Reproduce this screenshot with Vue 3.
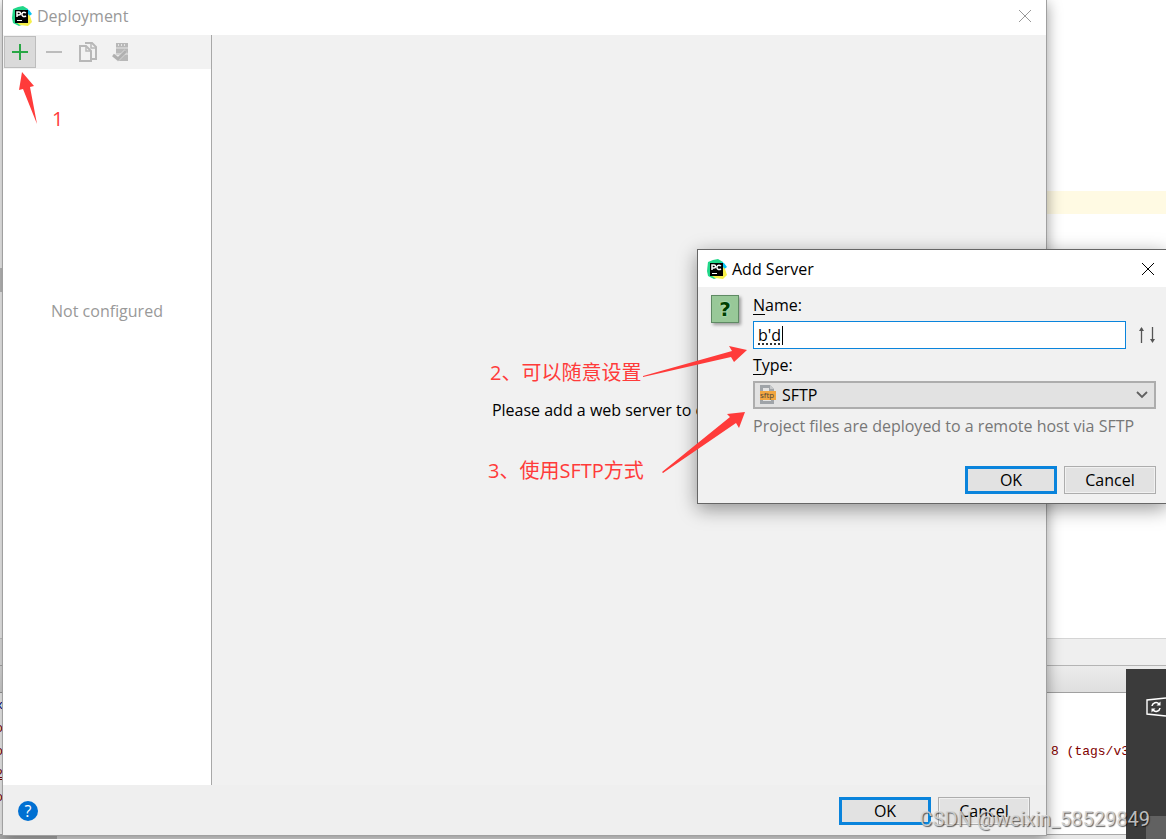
<template>
  <div class="desktop">
    <!-- IDE behind the dialogs -->
    <div class="ide">
      <div class="editor">
        <div class="active-line"></div>
        <div class="scroll-thumb"></div>
      </div>
      <div class="crumbs"></div>
      <div class="tool-header"></div>
      <div class="console">
        <div v-for="(line, i) in consoleLines" :key="i" class="console-line">
          <span class="line-head" :class="line.kind">{{ line.head }}</span>
          <span class="line-tail">{{ line.tail }}</span>
        </div>
      </div>
      <div class="status-bar"><div class="status-thumb"></div></div>
    </div>

    <aside class="dock">
      <svg class="dock-icon" width="20" height="20" viewBox="0 0 20 20" fill="none" stroke="#fff">
        <path d="M20 1L1 3v14l19 2" stroke-width="1.4" />
        <path d="M6 9a4 4 0 0 1 7-2M14 11a4 4 0 0 1-7 2" stroke-width="1.6" />
        <path d="M14.5 4.5v4h-4zM5.5 15.5v-4h4z" fill="#fff" stroke="none" />
      </svg>
      <div class="dock-corner"></div>
    </aside>

    <!-- Deployment -->
    <section class="window deployment">
      <header class="title-bar">
        <svg class="logo" viewBox="0 0 20 20">
          <path d="M1 3L6 1l5-1 5 3-1 14-8 3-6-3-1-5z" fill="#21d789" />
          <path d="M14 3l3 1 3 4-4 3z" fill="#07c3f2" />
          <path d="M15 7l3 3 2 6-4 4-8-1-3-2 4-6z" fill="#f5ef4a" />
          <path d="M3 4h13v13H3z" fill="#000" />
          <path d="M5 11V6h2a1.5 1.500 0 0 1 0 3H5M14 7c-3-2-4.500.5-4 2s2 2.200 4 1" fill="none" stroke="#fff" stroke-width="1.5" />
          <path d="M5 14.500h5" stroke="#fff" />
        </svg>
        <h1>Deployment</h1>
        <button class="close" aria-label="Close">
          <svg width="14" height="14" viewBox="0 0 14 14"><path d="M1 1l12 12M13 1L1 13" stroke="currentColor" /></svg>
        </button>
      </header>

      <div class="panes">
        <div class="servers">
          <div class="toolbar">
            <button class="tool active" aria-label="Add">
              <svg width="20" height="20" viewBox="0 0 20 20"><path d="M10 2v16M2 10h16" stroke="#28a745" stroke-width="2" /></svg>
            </button>
            <button class="tool" aria-label="Remove">
              <svg width="20" height="20" viewBox="0 0 20 20"><path d="M2 10h16" stroke="#bcbcbc" stroke-width="2" /></svg>
            </button>
            <button class="tool" aria-label="Copy">
              <svg width="20" height="20" viewBox="0 0 20 20" fill="none" stroke="#b8b8b8">
                <path d="M7 1h7l4 4v12h-4" stroke-width="2" />
                <path d="M7 4H2v15h11V9L8 4z" stroke-width="2" />
                <path d="M8 4v5h5M13 1v5h5" stroke-width="1.5" />
              </svg>
            </button>
            <button class="tool" aria-label="Use as default">
              <svg width="20" height="20" viewBox="0 0 20 20">
                <path d="M4 1h12v4H4zM4 7h12v4H4zM8 13h8v6H5z" fill="#b8b8b8" />
                <path d="M4 5h12v2H4zM4 11h12v2H4z" fill="#d0d0d0" />
                <path d="M6 3h1M9 3h1M12 3h1" stroke="#f2f2f2" stroke-width="1.5" />
                <path d="M2 13l4 4 8-8" fill="none" stroke="#e0e0e0" stroke-width="4" />
                <path d="M1 13l5 4 8-8" fill="none" stroke="#b0b0b0" stroke-width="3" />
              </svg>
            </button>
          </div>
          <p class="empty">Not configured</p>
        </div>
        <div class="details">Please add a web server to configure</div>
      </div>

      <footer class="actions">
        <button class="help" aria-label="Help">?</button>
        <button class="btn primary">OK</button>
        <button class="btn">Cancel</button>
      </footer>
    </section>

    <!-- Add Server -->
    <form class="window add-server" @submit.prevent>
      <header class="title-bar">
        <svg class="logo" viewBox="0 0 20 20">
          <path d="M1 3L6 1l5-1 5 3-1 14-8 3-6-3-1-5z" fill="#21d789" />
          <path d="M14 3l3 1 3 4-4 3z" fill="#07c3f2" />
          <path d="M15 7l3 3 2 6-4 4-8-1-3-2 4-6z" fill="#f5ef4a" />
          <path d="M3 4h13v13H3z" fill="#000" />
          <path d="M5 11V6h2a1.5 1.500 0 0 1 0 3H5M14 7c-3-2-4.500.5-4 2s2 2.200 4 1" fill="none" stroke="#fff" stroke-width="1.5" />
          <path d="M5 14.500h5" stroke="#fff" />
        </svg>
        <h1>Add Server</h1>
        <button type="button" class="close" aria-label="Close">
          <svg width="14" height="14" viewBox="0 0 14 14"><path d="M1 1l12 12M13 1L1 13" stroke="currentColor" /></svg>
        </button>
      </header>

      <div class="form-body">
        <div class="question">?</div>
        <div class="fields">
          <label for="server-name"><u>N</u>ame:</label>
          <div class="name-row">
            <div class="name-box">
              <input id="server-name" v-model="name" type="text" spellcheck="false" />
              <span class="caret"></span>
            </div>
            <button type="button" class="sort" aria-label="History">
              <svg width="18" height="18" viewBox="0 0 18 18" fill="none" stroke="#555">
                <path d="M3.500 17V2M14.500 1v14" stroke-width="1.3" />
                <path d="M1 5l2.500-4L6 5zM12 13l2.500 4 2.500-4z" fill="#555" stroke="none" />
              </svg>
            </button>
          </div>
          <label for="server-type" class="type-label"><u>T</u>ype:</label>
          <div class="type-box">
            <select id="server-type" v-model="type">
              <option v-for="t in types" :key="t">{{ t }}</option>
            </select>
            <svg class="type-icon" width="18" height="20" viewBox="0 0 18 20">
              <path d="M1 0h10l4 4v15H1z" fill="#a0a4a8" />
              <path d="M4 3h6v3h3v2H4zM4 14h8v2H4z" fill="#e3e3e3" />
              <path d="M11 0v4h4z" fill="#c6c8ca" />
              <path d="M1 6h16v9H1z" fill="#f2a640" />
              <text x="1" y="13" class="type-tag">sftp</text>
            </svg>
            <svg class="chevron" width="12" height="8" viewBox="0 0 12 8"><path d="M1 1l5 5 5-5" fill="none" stroke="#606060" stroke-width="1.8" /></svg>
          </div>
          <p class="hint">Project files are deployed to a remote host via SFTP</p>
        </div>
      </div>

      <footer class="actions">
        <button class="btn primary">OK</button>
        <button type="button" class="btn">Cancel</button>
      </footer>
    </form>

    <!-- step marks drawn over the windows -->
    <svg class="arrows" fill="#ff3b3a">
      <path d="M22 72L34 86L30 87L37 124L23 89L19 90z" />
      <path d="M747 350L729 346L732 351L643 376L643 377L731 357L734 362z" />
      <path d="M745 412L727 414L730 417L662 472L663 473L736 423L739 428z" />
    </svg>
    <span class="note note-1">1</span>
    <span class="note note-2">2、可以随意设置</span>
    <span class="note note-3">3、使用SFTP方式</span>

    <span class="watermark">CSDN @weixin_58529849</span>
  </div>
</template>

<script setup>
import { ref } from 'vue'

const name = ref("b'd")
const type = ref('SFTP')
const types = ['SFTP', 'FTP', 'FTPS', 'Local or mounted folder', 'In place']

const consoleLines = [
  { head: 'x', kind: 'cmd', tail: '' },
  { head: 'o', kind: '', tail: '' },
  { head: 'o', kind: '', tail: '8 (tags/v3' },
  { head: '2', kind: 'link', tail: '' },
  { head: 'o', kind: '', tail: '' }
]
</script>

<style>
body {
  margin: 0;
}
</style>

<style scoped>
.desktop {
  position: relative;
  min-height: 100vh;
  overflow: hidden;
  background: #fff;
  font-family: 'Open Sans', 'Noto Sans CJK SC', sans-serif;
  font-size: 16px;
  line-height: 20px;
  color: #000;
}

button,
input,
select {
  font: inherit;
  color: inherit;
  box-sizing: border-box;
}

button {
  border: 0;
  padding: 0;
  background: none;
}

/* ===== IDE ===== */
.ide {
  display: flex;
  flex-direction: column;
  min-height: 100vh;
}

.editor {
  flex: 1;
  padding-top: 191px;
}

.active-line {
  height: 23px;
  margin-left: 3px;
  background: #fffae3;
}

.scroll-thumb {
  width: 3px;
  height: 24px;
  margin-top: 54px;
  background: #c8c8c8;
}

.crumbs {
  height: 26px;
  border-top: 1px solid #d4d4d4;
  background: #efefef;
}

.tool-header {
  height: 26px;
  border-top: 1px solid #b4b4b4;
  border-bottom: 1px solid #a0a0a0;
  background: linear-gradient(#ececec, #dfdfdf);
}

.console {
  height: 140px;
  padding-top: 1px;
  font-family: 'Liberation Mono', monospace;
  font-size: 13px;
  line-height: 23px;
  color: #7f0000;
}

.console-line {
  display: flex;
  justify-content: space-between;
  height: 23px;
}

.line-head {
  display: flex;
  justify-content: flex-end;
  width: 3px;
}

.cmd {
  color: #00007f;
}

.link {
  text-decoration: underline;
}

.line-tail {
  width: 115px;
  white-space: nowrap;
}

.status-bar {
  height: 4px;
  border-top: 1px solid #a8a8a8;
  background: #e8e8e8;
}

.status-thumb {
  width: 57px;
  height: 4px;
  background: #b4b4b4;
}

.dock {
  position: absolute;
  right: 0;
  bottom: 0;
  display: flex;
  flex-direction: column;
  justify-content: space-between;
  align-items: flex-end;
  width: 40px;
  height: 170px;
  background: #3b3b3b;
}

.dock-icon {
  margin-top: 28px;
}

.dock-corner {
  width: 20px;
  height: 23px;
  background: #616161;
}

/* ===== windows ===== */
.window {
  position: absolute;
  display: flex;
  flex-direction: column;
  background: #f1f1f1;
}

.deployment {
  inset: -1px 119px 3px 2px;
  border: 1px solid #a0a0a0;
  box-shadow: 0 4px 14px rgba(0, 0, 0, 0.4);
}

.add-server {
  top: 249px;
  left: 697px;
  right: -1px;
  border: 1px solid #666;
  box-shadow: 0 5px 18px rgba(0, 0, 0, 0.4);
}

.title-bar {
  display: flex;
  align-items: center;
  box-sizing: border-box;
  height: 37px;
  padding: 0 11px 0 9px;
  background: #fff;
}

.deployment .title-bar {
  height: 35px;
  padding: 0 14px 4px 9px;
  color: #999;
}

.logo {
  width: 20px;
  height: 20px;
}

h1 {
  flex: 1;
  margin: 0 0 0 5px;
  font-size: 16px;
  font-weight: 400;
}

.close {
  display: flex;
}

.panes {
  display: flex;
  flex: 1;
}

.servers {
  width: 208px;
  border-right: 1px solid #a8a8a8;
  background: #fff;
}

.toolbar {
  display: flex;
  gap: 2px;
  padding: 1px;
  background: #f2f2f2;
}

.tool {
  display: flex;
  align-items: center;
  justify-content: center;
  width: 32px;
  height: 32px;
}

.tool.active {
  border: 1px solid #bdbdbd;
  background: #dadada;
}

.empty {
  margin: 232px 0 0;
  text-align: center;
  color: #999;
}

.details {
  display: flex;
  flex: 1;
  align-items: center;
  justify-content: center;
}

.actions {
  display: flex;
  align-items: center;
  justify-content: flex-end;
  gap: 7px;
}

.deployment .actions {
  padding: 12px 16px 10px 15px;
  background: #efefef;
}

.add-server .actions {
  padding: 30px 10px 9px;
}

.help {
  width: 20px;
  height: 20px;
  margin-right: auto;
  border-radius: 50%;
  background: #0070d2;
  color: #fff;
  line-height: 20px;
}

.btn {
  width: 92px;
  height: 28px;
  border: 1px solid #adadad;
  background: #e2e2e2;
  box-shadow: inset 0 0 0 1px #f1f1f1;
  line-height: 20px;
}

.btn.primary {
  border: 3px solid #0a84dc;
  box-shadow: none;
}

/* ===== Add Server form ===== */
.form-body {
  display: flex;
  gap: 14px;
  padding: 8px 10px 0 13px;
}

.question {
  box-sizing: border-box;
  width: 28px;
  height: 28px;
  border: 1px solid #5f8a64;
  background: #98c898;
  box-shadow: 2px 2px 3px rgba(0, 0, 0, 0.35);
  color: #003f00;
  font-family: 'DejaVu Sans', sans-serif;
  font-size: 20px;
  font-weight: 700;
  line-height: 26px;
  text-align: center;
  text-shadow: 0 0 2px #d8ffd8;
}

.fields {
  display: flex;
  flex: 1;
  flex-direction: column;
}

u {
  text-underline-offset: 3px;
}

.name-row {
  display: flex;
  align-items: center;
  gap: 12px;
  margin-top: 6px;
}

.name-box,
.type-box {
  position: relative;
  flex: 1;
}

.name-box input {
  display: block;
  width: 100%;
  height: 28px;
  padding: 0 4px;
  border: 1px solid #0a84dc;
  border-radius: 0;
  background: #fff;
  text-decoration: underline dotted;
  text-underline-offset: 3px;
}

.caret {
  position: absolute;
  top: 5px;
  left: 29px;
  width: 1px;
  height: 19px;
  background: #000;
}

.sort {
  display: flex;
}

.type-label {
  margin-top: 6px;
}

.type-box {
  margin-top: 6px;
}

.type-box select {
  display: block;
  width: 100%;
  height: 28px;
  padding: 0 27px;
  border: 2px solid #adadad;
  border-radius: 0;
  background: #e2e2e2;
  appearance: none;
}

.type-icon {
  position: absolute;
  top: 4px;
  left: 6px;
  pointer-events: none;
}

.type-tag {
  font-size: 8px;
  fill: #50483c;
}

.chevron {
  position: absolute;
  top: 10px;
  right: 8px;
  pointer-events: none;
}

.hint {
  margin: 7px 0 0;
  color: #777;
}

/* ===== notes ===== */
.arrows {
  position: absolute;
  top: 0;
  left: 0;
  width: 100%;
  height: 100%;
  pointer-events: none;
}

.note {
  position: absolute;
  color: #ff3b3a;
  font-size: 20px;
  line-height: 28px;
  white-space: nowrap;
}

.note-1 {
  top: 105px;
  left: 52px;
}

.note-2 {
  top: 359px;
  left: 490px;
}

.note-3 {
  top: 457px;
  left: 488px;
}

.watermark {
  position: absolute;
  right: 16px;
  bottom: 8px;
  color: rgba(215, 215, 215, 0.85);
  font-family: Roboto, 'Liberation Sans', sans-serif;
  font-size: 20px;
  line-height: 24px;
  text-shadow: 1px 1px 1px rgba(0, 0, 0, 0.6);
}
</style>
